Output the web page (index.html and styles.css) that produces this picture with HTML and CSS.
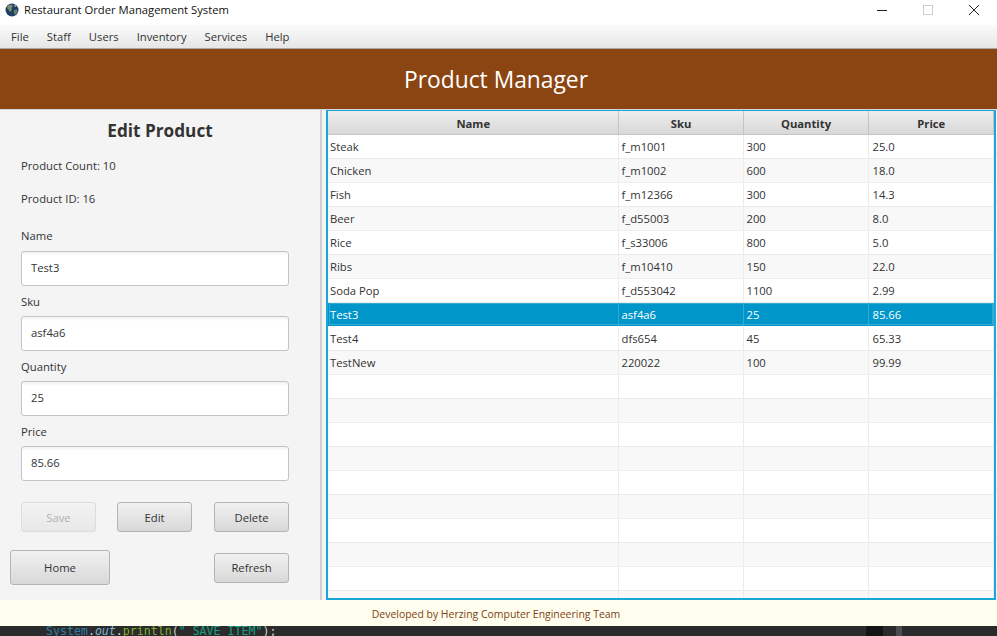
FILE: index.html
```html
<!DOCTYPE html>
<html lang="en">
<head>
<meta charset="UTF-8" />
<meta name="viewport" content="width=device-width, initial-scale=1" />
<title>Restaurant Order Management System</title>
<link rel="stylesheet" href="styles.css">
</head>
<body>

<div class="titlebar">
  <svg class="app-icon" width="14" height="14" viewBox="0 0 14 14">
    <circle cx="7" cy="7" r="6.5" fill="#1d3f66" />
    <path d="M3 2.5 L6.5 1.5 L8 3 L6.5 5 L7 7 L5 9 L3.5 6.5 L2 5 Z" fill="#7d8f6a" />
    <path d="M9 7 L12 6.5 L12.5 9 L10 12 L8.8 9.5 Z" fill="#6d7f66" />
    <path d="M9 1.5 L11.5 3 L10 4 Z" fill="#c8d2dc" />
  </svg>
  <span class="app-title">Restaurant Order Management System</span>
  <div class="window-btns">
    <svg width="12" height="12" viewBox="0 0 12 12"><path d="M1 6.5 H11" stroke="#222" stroke-width="1" /></svg>
    <svg width="12" height="12" viewBox="0 0 12 12"><rect x="1.5" y="1.5" width="9" height="9" fill="none" stroke="#ccc" /></svg>
    <svg width="12" height="12" viewBox="0 0 12 12"><path d="M1 1 L11 11 M11 1 L1 11" stroke="#222" stroke-width="1" /></svg>
  </div>
</div>

<nav class="menubar">
  <a href="#">File</a>
  <a href="#">Staff</a>
  <a href="#">Users</a>
  <a href="#">Inventory</a>
  <a href="#">Services</a>
  <a href="#">Help</a>
</nav>

<header class="banner">Product Manager</header>

<main class="content">
  <section class="side-panel">
    <h2 class="panel-title">Edit Product</h2>
    <p class="info-line first">Product Count: 10</p>
    <p class="info-line">Product ID: 16</p>

    <div class="fields">
      <div class="field">
        <label for="f-name">Name</label>
        <input id="f-name" type="text" value="Test3" />
      </div>
      <div class="field">
        <label for="f-sku">Sku</label>
        <input id="f-sku" type="text" value="asf4a6" />
      </div>
      <div class="field">
        <label for="f-qty">Quantity</label>
        <input id="f-qty" type="text" value="25" />
      </div>
      <div class="field">
        <label for="f-price">Price</label>
        <input id="f-price" type="text" value="85.66" />
      </div>
    </div>

    <div class="btn-row">
      <button class="btn" disabled>Save</button>
      <button class="btn">Edit</button>
      <button class="btn">Delete</button>
    </div>
    <div class="nav-row">
      <button class="btn btn-home">Home</button>
      <button class="btn">Refresh</button>
    </div>
  </section>

  <section class="table-wrap">
    <table class="product-table">
      <thead>
        <tr><th class="col-name">Name</th><th class="col-sku">Sku</th><th class="col-qty">Quantity</th><th>Price</th></tr>
      </thead>
      <tbody>
        <tr><td>Steak</td><td>f_m1001</td><td>300</td><td>25.0</td></tr>
        <tr><td>Chicken</td><td>f_m1002</td><td>600</td><td>18.0</td></tr>
        <tr><td>Fish</td><td>f_m12366</td><td>300</td><td>14.3</td></tr>
        <tr><td>Beer</td><td>f_d55003</td><td>200</td><td>8.0</td></tr>
        <tr><td>Rice</td><td>f_s33006</td><td>800</td><td>5.0</td></tr>
        <tr><td>Ribs</td><td>f_m10410</td><td>150</td><td>22.0</td></tr>
        <tr><td>Soda Pop</td><td>f_d553042</td><td>1100</td><td>2.99</td></tr>
        <tr class="selected"><td>Test3</td><td>asf4a6</td><td>25</td><td>85.66</td></tr>
        <tr><td>Test4</td><td>dfs654</td><td>45</td><td>65.33</td></tr>
        <tr><td>TestNew</td><td>220022</td><td>100</td><td>99.99</td></tr>
        <tr><td></td><td></td><td></td><td></td></tr>
        <tr><td></td><td></td><td></td><td></td></tr>
        <tr><td></td><td></td><td></td><td></td></tr>
        <tr><td></td><td></td><td></td><td></td></tr>
        <tr><td></td><td></td><td></td><td></td></tr>
        <tr><td></td><td></td><td></td><td></td></tr>
        <tr><td></td><td></td><td></td><td></td></tr>
        <tr><td></td><td></td><td></td><td></td></tr>
        <tr><td></td><td></td><td></td><td></td></tr>
        <tr><td></td><td></td><td></td><td></td></tr>
      </tbody>
    </table>
  </section>
</main>

<footer class="footer">Developed by Herzing Computer Engineering Team</footer>

<div class="code-strip">
  <code class="code-line"><span class="c-type">System</span><span class="c-plain">.</span><span class="c-field">out</span><span class="c-plain">.</span><span class="c-call">println</span><span class="c-plain">(</span><span class="c-str">" SAVE ITEM"</span><span class="c-plain">);</span></code>
  <span class="strip-dark"></span>
  <span class="strip-thumb"></span>
</div>

</body>
</html>
```

FILE: styles.css
```css
html, body {
  height: 636px;
  overflow: hidden;
}
body {
  margin: 0;
  font-family: "Open Sans", "Noto Sans", sans-serif;
  font-size: 11.25px;
  color: #333;
  background: #f4f4f4;
}

/* window chrome */
.titlebar {
  height: 25px;
  background: #fff;
  display: flex;
  align-items: center;
  padding: 0 0 6px 5px;
  box-sizing: border-box;
  color: #111;
}
.app-icon {
  margin-right: 5px;
}
.window-btns {
  margin-left: auto;
  display: flex;
  gap: 34px;
  padding-right: 17px;
}

.menubar {
  height: 24px;
  box-sizing: border-box;
  background: linear-gradient(#fbfbfb, #e6e6e6);
  border-bottom: 1px solid #a8a8a8;
  display: flex;
  align-items: center;
  padding: 0 0 0 11px;
  gap: 18px;
}
.menubar a {
  color: #333;
  text-decoration: none;
}

.banner {
  height: 60px;
  box-sizing: border-box;
  padding-right: 5px;
  background: #8b4512;
  color: #fff;
  font-size: 22.8px;
  text-align: center;
  line-height: 62px;
}

/* main area */
.content {
  height: 491px;
  display: flex;
  border-top: 1px solid #d8d8d8;
  box-sizing: border-box;
}
.side-panel {
  width: 320px;
  border-right: 2px solid #d0d0d0;
}
.panel-title {
  margin: 8px 0 0 0;
  font-size: 17.2px;
  line-height: 26px;
  text-align: center;
  font-weight: 700;
  color: #333;
}
.info-line {
  margin: 17px 0 0 21px;
  line-height: 16px;
}
.info-line.first {
  margin-top: 14px;
}

.fields {
  margin: 21px 31px 0 21px;
}
.field {
  margin-bottom: 8px;
}
.field:last-child {
  margin-bottom: 7px;
}
.field label {
  display: block;
  line-height: 16px;
  margin-bottom: 6px;
}
.field:first-child label {
  margin-bottom: 7px;
}
.field input {
  display: block;
  width: 100%;
  height: 35px;
  box-sizing: border-box;
  padding: 0 9px 2px;
  font: inherit;
  color: #333;
  background: linear-gradient(#f2f2f2, #fff 4px);
  border: 1px solid #c4c4c4;
  border-radius: 3px;
}

.btn {
  font: inherit;
  color: #333;
  width: 75px;
  height: 30px;
  padding: 0;
  background: linear-gradient(#f1f1f1, #d8d8d8);
  border: 1px solid #b4b4b4;
  border-radius: 3px;
}
.btn:disabled {
  color: #b0b0b0;
  background: linear-gradient(#f3f3f3, #e8e8e8);
  border-color: #dcdcdc;
}
.btn-row {
  display: flex;
  gap: 21px;
  margin: 21px 31px 0 21px;
}
.btn-row .btn:last-child {
  margin-left: 1px;
}
.nav-row {
  display: flex;
  justify-content: space-between;
  align-items: center;
  margin: 18px 31px 0 10px;
}
.btn-home {
  width: 100px;
  height: 35px;
}

/* product table */
.table-wrap {
  margin: 0 1px 0 4px;
  flex: 1;
  height: 490px;
  box-sizing: border-box;
  background: #fff;
  border: 2px solid #1ba6d8;
  border-top-width: 1px;
  overflow: hidden;
}
.product-table {
  width: 100%;
  table-layout: fixed;
  border-collapse: collapse;
}
.product-table th {
  height: 23px;
  padding: 2px 0 0 1px;
  box-sizing: border-box;
  font-weight: 700;
  color: #333;
  background: linear-gradient(#ededed, #d8d8d8);
  border-right: 1px solid #c4c4c4;
  border-bottom: 1px solid #c4c4c4;
}
.col-name { width: 290px; }
.col-sku { width: 125px; }
.col-qty { width: 125px; }

.product-table td {
  height: 24px;
  box-sizing: border-box;
  padding: 0 0 0 3px;
  border-right: 1px solid #ececec;
  border-bottom: 1px solid #ececec;
  white-space: nowrap;
  overflow: hidden;
}
.product-table td:first-child {
  padding-left: 2px;
}
.product-table td:last-child {
  padding-left: 4px;
}
.product-table tbody tr:nth-child(even) {
  background: #f8f8f8;
}
.product-table tbody tr.selected {
  background: #0096c9;
  color: #fff;
  outline: 1px solid #33aad4;
  outline-offset: -2px;
}
.product-table tr.selected td {
  border-right-color: #33aad4;
  border-bottom-color: #fff;
}

/* bottom */
.footer {
  height: 26px;
  box-sizing: border-box;
  padding-right: 5px;
  background: #fffeee;
  color: #7b3f10;
  font-size: 10.45px;
  line-height: 28px;
  text-align: center;
}
.code-strip {
  height: 10px;
  background: #2b2b2b;
  display: flex;
  overflow: hidden;
}
.code-line {
  margin-left: 46px;
  font-family: "DejaVu Sans Mono", "Liberation Mono", monospace;
  font-size: 11.6px;
  line-height: 10px;
  white-space: pre;
}
.c-type { color: #2d7fa8; }
.c-plain { color: #d0d0d0; }
.c-field { color: #7fb4d8; font-style: italic; }
.c-call { color: #7fae2a; }
.c-str { color: #17a085; }
.strip-dark {
  margin-left: auto;
  width: 17px;
  background: #141414;
}
.strip-thumb {
  margin: 0 95px 0 13px;
  width: 6px;
  background: #4a4d50;
}
```
